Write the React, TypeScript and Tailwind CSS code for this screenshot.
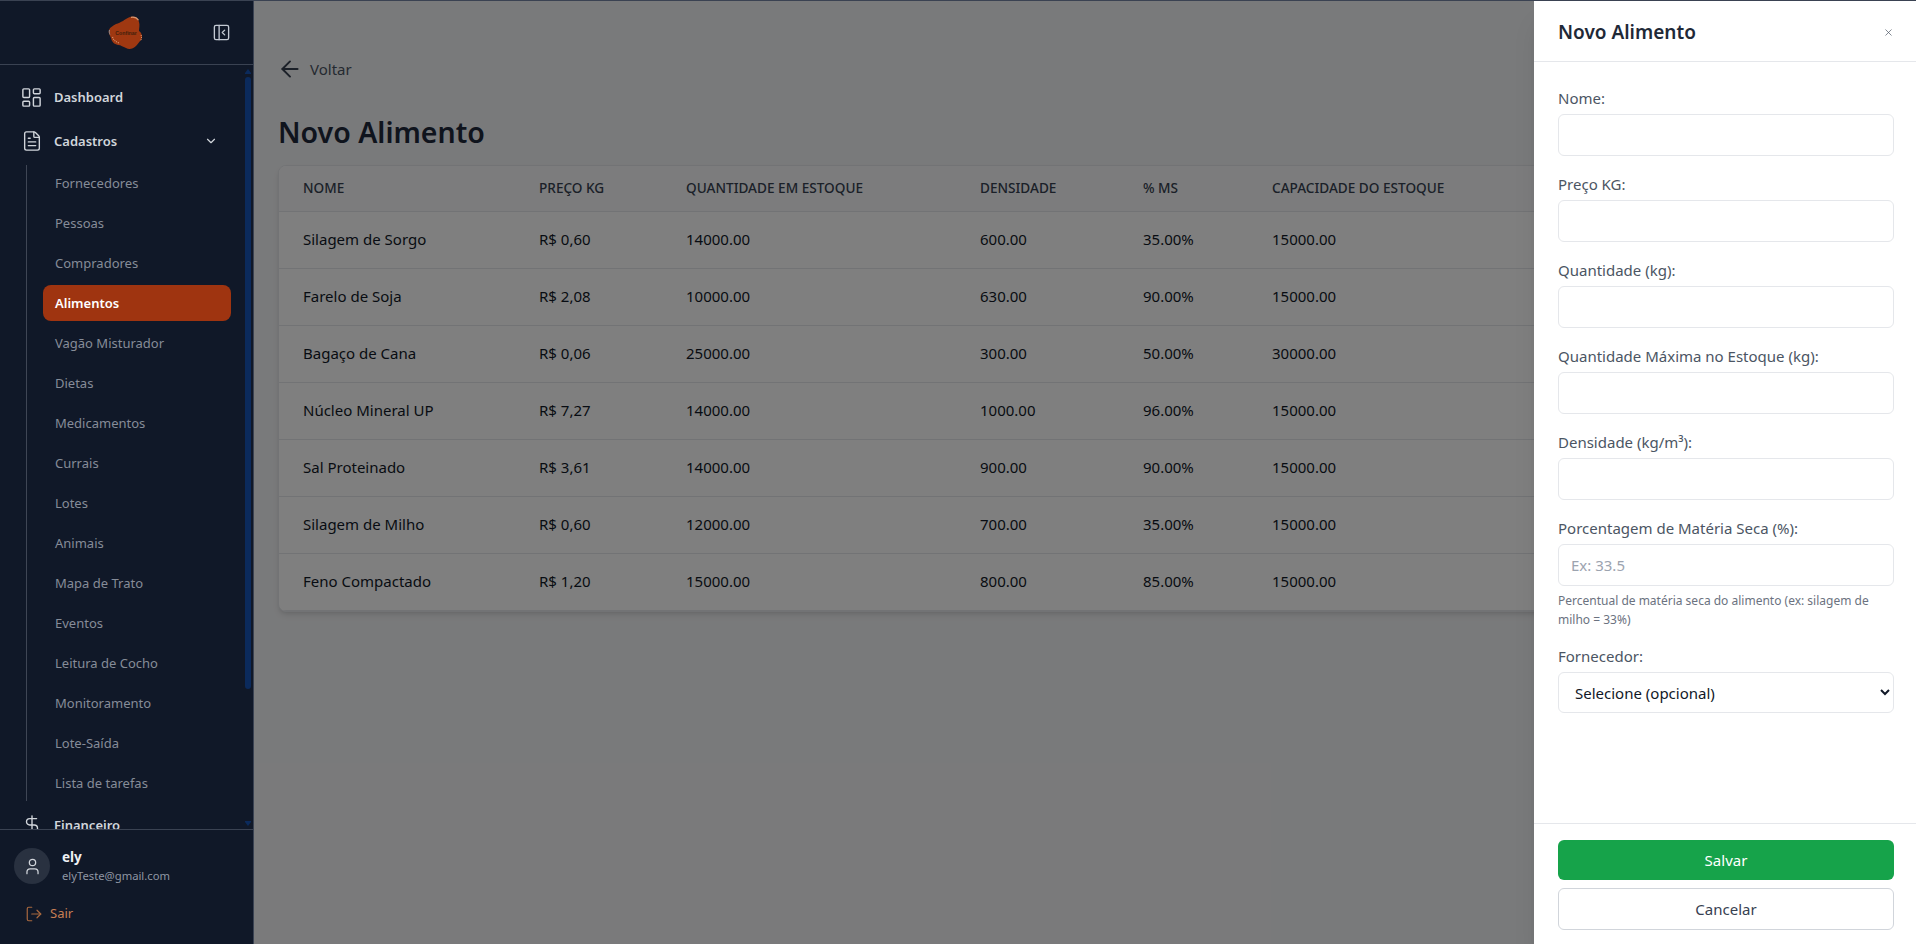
import { ArrowLeft, ChevronDown, DollarSign, FileText, LayoutDashboard, LogOut, PanelLeftClose, User, X } from "lucide-react";

const font = { fontFamily: '"Noto Sans", "Open Sans", sans-serif' };

const subItems = ["Fornecedores", "Pessoas", "Compradores", "Alimentos", "Vagão Misturador", "Dietas", "Medicamentos", "Currais", "Lotes", "Animais", "Mapa de Trato", "Eventos", "Leitura de Cocho", "Monitoramento", "Lote-Saída", "Lista de tarefas"];

const rows = [
  ["Silagem de Sorgo", "R$ 0,60", "14000.00", "600.00", "35.00%", "15000.00"],
  ["Farelo de Soja", "R$ 2,08", "10000.00", "630.00", "90.00%", "15000.00"],
  ["Bagaço de Cana", "R$ 0,06", "25000.00", "300.00", "50.00%", "30000.00"],
  ["Núcleo Mineral UP", "R$ 7,27", "14000.00", "1000.00", "96.00%", "15000.00"],
  ["Sal Proteinado", "R$ 3,61", "14000.00", "900.00", "90.00%", "15000.00"],
  ["Silagem de Milho", "R$ 0,60", "12000.00", "700.00", "35.00%", "15000.00"],
  ["Feno Compactado", "R$ 1,20", "15000.00", "800.00", "85.00%", "15000.00"],
];

function Logo() {
  return (
    <svg width="36" height="34" viewBox="0 0 36 34">
      <path d="M22 1c4-1 8 1 9 5 1 3 0 6 0 9 3 2 4 6 2 9-2 2-3 4-5 6-3 3-7 4-10 2-3-1-5-3-8-3-4-1-6-3-7-7-1-3-3-5-2-8 1-3 4-4 7-6 5-1 9-5 14-7z" fill="#9f3811" />
      <path d="M23 1.3c3-.6 6 .6 7.5 3" fill="none" stroke="#d9966f" strokeWidth="1.2" />
      <path d="M4.5 21c1 3 3 5 7 6" fill="none" stroke="#d9966f" strokeWidth="1.2" strokeDasharray="1 1" />
      <path d="M33 19c1 2 .5 4-.5 6" fill="none" stroke="#d9966f" strokeWidth="1" strokeDasharray="1 1" />
      <path d="M1.5 14c-.4 1.500-.2 3 .4 4.500" fill="none" stroke="#8c8f96" strokeWidth="1" />
      <text x="18" y="18.500" textAnchor="middle" fontSize="5.200" fontWeight="600" fill="#43200c" fontFamily="Liberation Sans, sans-serif">Confinar</text>
    </svg>
  );
}

function Sidebar() {
  return (
    <aside className="flex h-full w-[254px] shrink-0 flex-col border-r border-[#3a4252] bg-[#101828]">
      <div className="flex h-[64px] shrink-0 items-center border-b border-[#3a4252]">
        <div className="ml-[108px] mt-[1px]"><Logo /></div>
        <PanelLeftClose className="ml-[68px] h-[19px] w-[19px] text-[#c3c9d3]" strokeWidth={1.7} />
      </div>
      <nav className="relative min-h-0 flex-1 overflow-hidden pt-[10px] text-[13px]">
        <div className="flex h-[44px] items-center pl-[20px] font-semibold text-[#d1d5db]">
          <LayoutDashboard className="h-[23px] w-[23px]" strokeWidth={1.5} />
          <span className="ml-[11px] pt-[2px]">Dashboard</span>
        </div>
        <div className="flex h-[44px] items-center pl-[21px] font-semibold text-[#d1d5db]">
          <FileText className="h-[22px] w-[22px]" strokeWidth={1.5} />
          <span className="ml-[11px] pt-[2px]">Cadastros</span>
          <ChevronDown className="ml-auto mr-[35px] h-[14px] w-[14px]" strokeWidth={2} />
        </div>
        <ul className="ml-[26px] mt-[2px] flex w-[205px] flex-col gap-1 border-l border-[#3f4655] pl-[16px]">
          {subItems.map((s) =>
            s === "Alimentos" ? (
              <li key={s} className="flex h-[36px] items-center rounded-lg bg-[#9f3410] pl-[12px] pt-[2px] font-semibold text-white">{s}</li>
            ) : (
              <li key={s} className="flex h-[36px] items-center pl-[12px] pt-[2px] text-[#868c98]">{s}</li>
            ),
          )}
        </ul>
        <div className="mt-[2px] flex h-[44px] items-center pl-[21px] font-semibold text-[#d1d5db]">
          <DollarSign className="h-[22px] w-[22px]" strokeWidth={1.5} />
          <span className="ml-[11px] pt-[2px]">Financeiro</span>
        </div>
        <svg className="absolute right-[2px] top-[4px] h-[5px] w-[6px]" viewBox="0 0 6 5"><path d="M3 0l3 4v1H0V4z" fill="#0b2a5c" /></svg>
        <div className="absolute right-[2px] top-[12px] h-[612px] w-[6px] rounded-[3px] bg-[#0b2a5c]" />
        <svg className="absolute bottom-[3px] right-[2px] h-[5px] w-[6px]" viewBox="0 0 6 5"><path d="M3 5L0 1V0h6v1z" fill="#0b2a5c" /></svg>
      </nav>
      <div className="h-[115px] shrink-0 border-t border-[#3a4252]">
        <div className="ml-[14px] mt-[16px] flex items-center">
          <div className="flex h-9 w-9 items-center justify-center rounded-full bg-[#293140]">
            <User className="h-[19px] w-[19px] text-[#d1d5db]" strokeWidth={1.6} />
          </div>
          <div className="ml-[12px] pt-[2px]">
            <div className="text-[13.500px] font-bold leading-[18px] text-[#eef0f3]">ely</div>
            <div className="text-[11.250px] leading-[20px] text-[#8f96a3]">elyTeste@gmail.com</div>
          </div>
        </div>
        <div className="ml-[25px] mt-[18px] flex items-center text-[13px] text-[#c77f54]">
          <LogOut className="h-[18px] w-[18px] text-[#a8683f]" strokeWidth={1.6} />
          <span className="ml-[7px]">Sair</span>
        </div>
      </div>
    </aside>
  );
}

function Table() {
  const heads = ["NOME", "PREÇO KG", "QUANTIDADE EM ESTOQUE", "DENSIDADE", "% MS", "CAPACIDADE DO ESTOQUE"];
  const widths = ["w-[236px]", "w-[147px]", "w-[294px]", "w-[163px]", "w-[129px]", ""];
  return (
    <div className="overflow-hidden rounded-lg border border-[#e5e7eb] bg-white shadow-md">
      <table className="w-full table-fixed border-collapse text-left">
        <thead className="bg-[#f8f9fa]">
          <tr className="h-[45px] border-b border-[#e5e7eb]">
            {heads.map((h, i) => (
              <th key={h} className={`${widths[i]} px-6 text-[13.600px] font-medium text-[#374151]`}>{h}</th>
            ))}
          </tr>
        </thead>
        <tbody>
          {rows.map((r) => (
            <tr key={r[0]} className="h-[57px] border-b border-[#e5e7eb]">
              {r.map((c, i) => (
                <td key={i} className="px-6 text-[15px] text-[#111827]">{c}</td>
              ))}
            </tr>
          ))}
        </tbody>
      </table>
    </div>
  );
}

function Field({ label, placeholder, top }: { label: string; placeholder?: string; top: string }) {
  return (
    <div className={top}>
      <label className="block text-[15px] leading-[24px] text-[#4b5563]">{label}</label>
      <input placeholder={placeholder} className="mt-[4px] block h-[42px] w-full rounded-md border border-[#e5e7eb] bg-white px-3 text-[15px] outline-none placeholder:text-[#9ca3af]" />
    </div>
  );
}

function Panel() {
  return (
    <div className="absolute inset-y-0 right-0 flex w-[382px] flex-col bg-white shadow-xl">
      <div className="flex h-[61px] shrink-0 items-center justify-between border-b border-[#e5e7eb] pl-6 pr-[22px] pt-[2px]">
        <h2 className="text-[19px] font-semibold text-[#1f2937]">Novo Alimento</h2>
        <X className="h-[11px] w-[11px] text-[#4b5563]" strokeWidth={1.5} />
      </div>
      <div className="min-h-0 flex-1 pl-6 pr-[22px] pt-[24px]">
        <Field label="Nome:" top="" />
        <Field label="Preço KG:" top="mt-[16px]" />
        <Field label="Quantidade (kg):" top="mt-[16px]" />
        <Field label="Quantidade Máxima no Estoque (kg):" top="mt-[16px]" />
        <Field label="Densidade (kg/m³):" top="mt-[16px]" />
        <Field label="Porcentagem de Matéria Seca (%):" placeholder="Ex: 33.5" top="mt-[16px]" />
        <p className="mt-[5px] text-[12px] leading-[19px] text-[#6b7280]">Percentual de matéria seca do alimento (ex: silagem de milho = 33%)</p>
        <div className="mt-[15px]">
          <label className="block text-[15px] leading-[24px] text-[#4b5563]">Fornecedor:</label>
          <select className="mt-[4px] block h-[41px] w-full rounded-md border border-[#e5e7eb] bg-white px-3 text-[15px] text-[#111827] outline-none">
            <option>Selecione (opcional)</option>
          </select>
        </div>
      </div>
      <div className="flex h-[121px] shrink-0 flex-col gap-[8px] border-t border-[#e5e7eb] pl-6 pr-[22px] pt-[16px]">
        <button className="h-[40px] rounded-md bg-[#16a34a] text-[15px] text-white">Salvar</button>
        <button className="h-[42px] rounded-md border border-[#d1d5db] bg-white text-[15px] text-[#374151]">Cancelar</button>
      </div>
    </div>
  );
}

export default function App() {
  return (
    <div style={font} className="flex h-[944px] w-[1916px] overflow-hidden border-t border-[#3a4252]">
      <Sidebar />
      <main className="relative min-w-0 flex-1 bg-[#f3f4f6] px-[24px]">
        <div className="mt-[56px] flex h-[24px] items-center text-[15px] text-[#4b5563]">
          <ArrowLeft className="-ml-[1px] h-[26px] w-[26px] text-[#374151]" strokeWidth={1.8} />
          <span className="ml-[7px]">Voltar</span>
        </div>
        <h1 className="mt-[29px] h-[44px] text-[28.500px] font-semibold leading-[44px] text-[#1e293b]">Novo Alimento</h1>
        <div className="mt-[11px]"><Table /></div>
        <div className="absolute inset-0 bg-black/50" />
        <Panel />
      </main>
    </div>
  );
}
